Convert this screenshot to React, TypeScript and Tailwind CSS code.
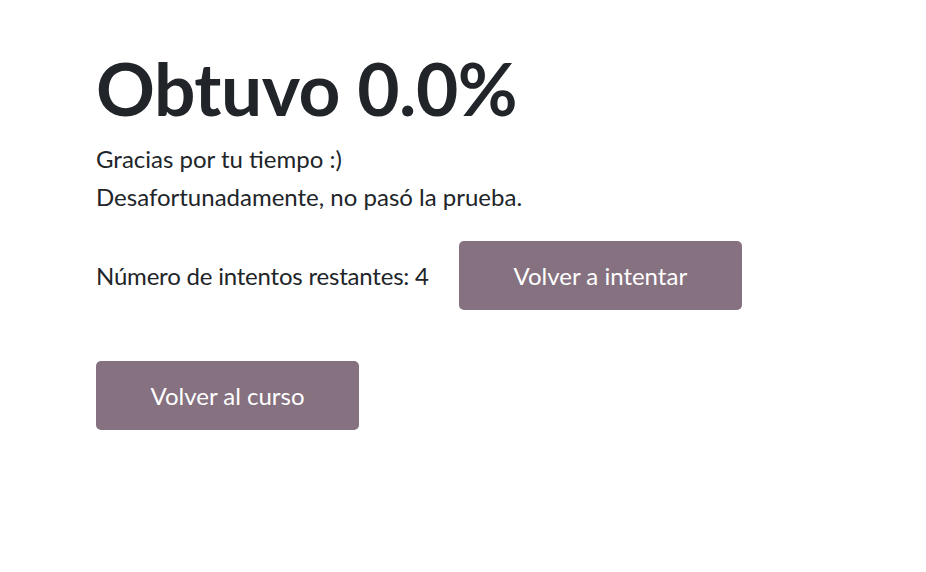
import React from "react";

export default function App() {
  const attemptsLeft = 4;
  const score = "0.0";

  return (
    <div
      className="min-h-screen bg-white text-[#212529]"
      style={{ fontFamily: "Lato, 'Noto Sans', sans-serif" }}
    >
      <div className="px-[96px] pt-[44px]">
        <h1 className="text-[73px] font-bold leading-[88px] tracking-[-0.5px]">
          Obtuvo {score}%
        </h1>

        <div className="mt-[8px] text-[24px] leading-[38px]">
          <p>Gracias por tu tiempo :)</p>
          <p>Desafortunadamente, no pasó la prueba.</p>
        </div>

        <div className="mt-[25px] flex items-center gap-[30px]">
          <span className="text-[24px] tracking-[-0.2px]">
            Número de intentos restantes: {attemptsLeft}
          </span>
          <button
            type="button"
            className="h-[69px] w-[283px] rounded-[5px] bg-[#857180] text-[24px] text-white"
          >
            Volver a intentar
          </button>
        </div>

        <div className="mt-[51px]">
          <button
            type="button"
            className="h-[69px] w-[263px] rounded-[5px] bg-[#857180] text-[24px] text-white"
          >
            Volver al curso
          </button>
        </div>
      </div>
    </div>
  );
}
